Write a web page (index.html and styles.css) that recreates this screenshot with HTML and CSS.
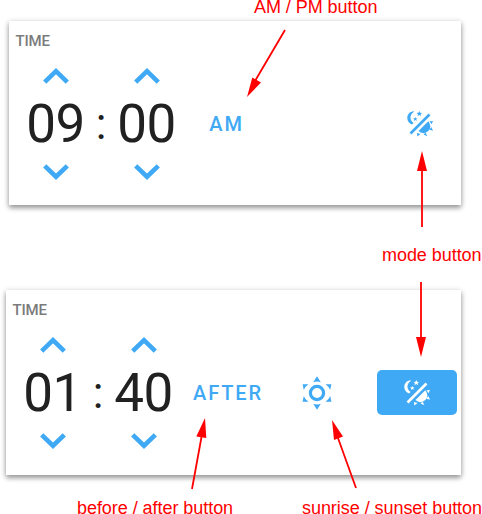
FILE: index.html
```html
<!DOCTYPE html>
<html lang="en">
<head>
<meta charset="utf-8">
<title>Time</title>
<link rel="stylesheet" href="styles.css">
</head>
<body>
<svg class="defs" width="0" height="0">
  <symbol id="up" viewBox="0 0 26 18"><path d="M1.700 16.100 13 5.200l11.300 10.900" fill="none" stroke="currentColor" stroke-width="4.600"/></symbol>
  <symbol id="down" viewBox="0 0 26 18"><path d="M1.700 2.800 13 13.700 24.300 2.800" fill="none" stroke="currentColor" stroke-width="4.600"/></symbol>
  <symbol id="mode" viewBox="0 0 28 29">
    <g fill="currentColor">
      <path d="M7.800 2.300C3.500 2.600 1.300 5.600 1.300 9c0 3.200 2 5.500 4.700 6.400l1.600-1.500C3.500 11.500 3.200 5.800 8 2.800Z"/>
      <path d="M13.300 2l.8 1.800 2 .1-1.500 1.300.5 2-1.800-1.100-1.800 1.100.5-2-1.500-1.300 2-.1z"/>
      <path d="M9.300 7.900l.6 1.400 1.600.1-1.200 1 .4 1.600-1.400-.9-1.400.9.4-1.600-1.200-1 1.600-.1z"/>
      <path d="M22.300 12.300A6.500 6.500 0 0 1 12.500 22.100Z"/>
      <path d="M23.600 12.200 27 12l-1.500 3.300zM25.300 18l1.700 3.700-3.600-1zM19.600 23.600l1.700 3.600-3.700-1.800zM11 24l3.600.9-3.300 2.500z"/>
    </g>
    <path d="M4.500 24.500 23.500 5.500" stroke="currentColor" stroke-width="2.700"/>
  </symbol>
  <symbol id="sun" viewBox="0 0 30 35">
    <circle cx="15" cy="18" r="6.600" fill="none" stroke="currentColor" stroke-width="3.200"/>
    <path fill="currentColor" d="M15 1.300 18.800 7.200Q15 5.900 11.200 7.200ZM15 34.700 18.800 28.800Q15 30.100 11.200 28.800ZM.6 9.200H6.500Q3 11.500 1.800 15ZM29.400 9.200H23.500Q27 11.500 28.200 15ZM.6 26.800H6.500Q3 24.500 1.800 21ZM29.400 26.800H23.500Q27 24.500 28.200 21Z"/>
  </symbol>
</svg>

<main class="page">
  <section class="card card-clock">
    <h2 class="title">TIME</h2>
    <div class="row">
      <div class="spinner"><svg class="chev"><use href="#up"/></svg><span class="digits">09</span><svg class="chev"><use href="#down"/></svg></div>
      <span class="colon">:</span>
      <div class="spinner"><svg class="chev"><use href="#up"/></svg><span class="digits">00</span><svg class="chev"><use href="#down"/></svg></div>
      <span class="text-btn am">AM</span>
      <span class="mode-btn"><svg class="mode-icon"><use href="#mode"/></svg></span>
    </div>
  </section>

  <section class="card card-sun">
    <h2 class="title">TIME</h2>
    <div class="row">
      <div class="spinner"><svg class="chev"><use href="#up"/></svg><span class="digits">01</span><svg class="chev"><use href="#down"/></svg></div>
      <span class="colon">:</span>
      <div class="spinner"><svg class="chev"><use href="#up"/></svg><span class="digits">40</span><svg class="chev"><use href="#down"/></svg></div>
      <span class="text-btn after">AFTER</span>
      <svg class="sun-icon"><use href="#sun"/></svg>
      <span class="mode-btn active"><svg class="mode-icon"><use href="#mode"/></svg></span>
    </div>
  </section>

  <svg class="arrows" viewBox="0 0 482 514">
    <g stroke="#f00" stroke-width="1.800">
      <path d="M285 30 255 81M422 227V170M421 282V338M192 489 201.500 437M356 488 338 438"/>
    </g>
    <g fill="#f00">
      <path d="M247 97 252.300 77.500 261 82.500ZM422 151 427 171H417ZM421 357 416 337H426ZM205 418 206.300 438 196.300 436.500ZM332 420 343 436.500 334 440Z"/>
    </g>
  </svg>
  <span class="note note-am">AM / PM button</span>
  <span class="note note-mode">mode button</span>
  <span class="note note-after">before / after button</span>
  <span class="note note-sun">sunrise / sunset button</span>
</main>
</body>
</html>
```

FILE: styles.css
```css
* { box-sizing: border-box; }
body { margin: 0; background: #fff; }
.defs { position: absolute; }
.page {
  position: relative;
  width: 482px;
  height: 514px;
  padding-top: 21px;
  overflow: hidden;
  font-family: Roboto, sans-serif;
}
.card {
  background: #fff;
  box-shadow: 0 3px 5px rgba(0, 0, 0, .34), 0 1px 6px rgba(0, 0, 0, .16);
  padding-top: 11px;
}
.card-clock { width: 452px; height: 184px; margin-left: 9px; }
.card-sun { width: 455px; height: 185px; margin: 85px 0 0 6px; }
.title {
  margin: 0 0 0 6.500px;
  font-size: 15px;
  line-height: 18px;
  font-weight: 500;
  letter-spacing: -.15px;
  color: #7b7b7b;
}
.row {
  display: flex;
  align-items: center;
  height: 115px;
  margin-top: 16px;
  padding-left: 16.500px;
  color: #3fa9f5;
}
.spinner {
  display: flex;
  flex-direction: column;
  align-items: center;
  justify-content: space-between;
  width: 60px;
  height: 115px;
}
.chev { display: block; width: 26px; height: 18px; }
.digits {
  padding-top: 2px;
  font-size: 53px;
  line-height: 61px;
  letter-spacing: -.5px;
  color: #212121;
}
.colon {
  width: 31px;
  padding-top: 1px;
  text-align: center;
  font-size: 44px;
  line-height: 52px;
  color: #212121;
}
.text-btn {
  text-align: center;
  font-size: 20px;
  line-height: 24px;
  font-weight: 500;
  letter-spacing: 1.850px;
}
.am { width: 100px; }
.after { width: 109px; }
.sun-icon { width: 30px; height: 35px; margin-left: 19.500px; }
.mode-btn {
  display: flex;
  align-items: center;
  justify-content: center;
  width: 80px;
  height: 45px;
  margin: 0 1px 0 auto;
  border-radius: 5px;
}
.mode-btn.active { margin-right: 4px; background: #3fa9f5; color: #fff; }
.mode-icon { width: 28px; height: 29px; }
.arrows { position: absolute; left: 0; top: 0; width: 482px; height: 514px; }
.note {
  position: absolute;
  font: 18px/14px "Liberation Sans", sans-serif;
  letter-spacing: -.05px;
  color: #f00;
  white-space: nowrap;
}
.note-am { left: 254px; top: 0; }
.note-mode { left: 382px; top: 248px; }
.note-after { left: 77px; top: 500px; padding-top: 1px; }
.note-sun { left: 302px; top: 500px; padding-top: 1px; }
```
